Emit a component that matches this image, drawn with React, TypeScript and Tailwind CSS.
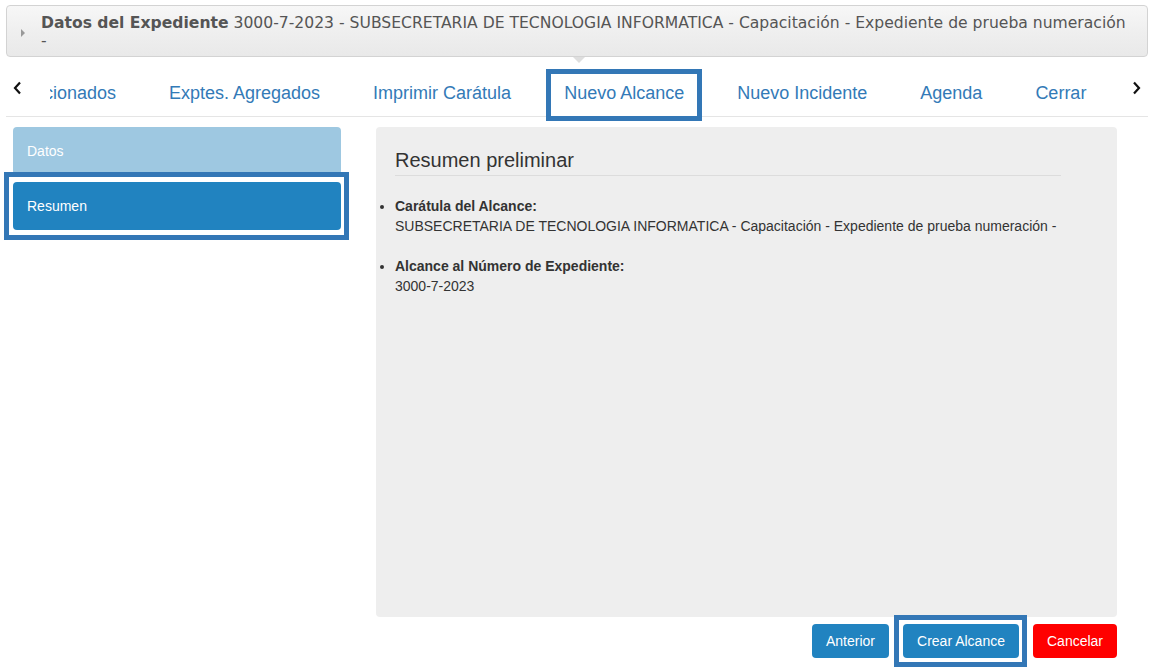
import { ReactNode } from "react";

const tabs = ["Exptes. Agregados", "Imprimir Carátula", "Nuevo Alcance", "Nuevo Incidente", "Agenda", "Cerrar"];

function Mark({ className }: { className: string }) {
  // annotation frame drawn over the screenshot
  return <div className={"pointer-events-none absolute border-[5px] border-[#3377b6] " + className} />;
}

function Chevron({ dir }: { dir: "left" | "right" }) {
  return (
    <svg width="12" height="14" viewBox="0 0 12 14" className="block">
      <polyline
        points={dir === "left" ? "8,1.5 3,7 8,12.5" : "4,1.5 9,7 4,12.5"}
        fill="none"
        stroke="#111"
        strokeWidth="2.2"
      />
    </svg>
  );
}

function Btn({ children, className }: { children: ReactNode; className: string }) {
  return (
    <button type="button" className={"h-[34px] rounded-[4px] text-[14px] text-white " + className}>
      {children}
    </button>
  );
}

export default function App() {
  return (
    <div className="relative h-[668px] w-[1154px] overflow-hidden bg-white font-['Liberation_Sans',Arial,sans-serif] text-[#333]">
      {/* expediente header */}
      <div className="relative mx-[6px] mt-[5px] h-[52px] rounded-[4px] border border-[#d3d3d3] bg-gradient-to-b from-[#f7f7f7] via-[#efefef] to-[#e9e9e9] pl-[34px] pt-[8px] font-['DejaVu_Sans',Verdana,sans-serif] text-[15.6px] leading-[18px] text-[#555]">
        <span className="absolute left-[14px] top-[23px] h-0 w-0 border-y-[4px] border-l-[4px] border-y-transparent border-l-[#999]" />
        <div className="whitespace-nowrap">
          <b>Datos del Expediente</b> 3000-7-2023 - SUBSECRETARIA DE TECNOLOGIA INFORMATICA - Capacitación - Expediente de prueba numeración
          <br />-
        </div>
        <span className="absolute -bottom-[7px] left-[566px] h-0 w-0 border-x-[6px] border-t-[6px] border-x-transparent border-t-[#dedede]" />
      </div>

      {/* tabs */}
      <div className="mx-[6px] mt-[11px] flex h-[49px] border-b border-[#e5e5e5]">
        <div className="flex w-[22px] justify-center pl-[2px] pt-[13px]">
          <Chevron dir="left" />
        </div>
        <div className="flex flex-1 overflow-x-clip pt-[2px] text-[18px] text-[#337ab7]">
          <div className="ml-[22px] mr-[26.5px] flex w-[66px] items-center justify-end overflow-hidden whitespace-nowrap">Relacionados</div>
          {tabs.map((t) => (
            <div key={t} className="relative flex items-center whitespace-nowrap px-[26.5px]">
              {t}
              {t === "Nuevo Alcance" && <Mark className="-bottom-[5px] -top-[1px] left-[8px] right-[9px]" />}
            </div>
          ))}
        </div>
        <div className="flex w-[30px] justify-end pr-[6px] pt-[13px]">
          <Chevron dir="right" />
        </div>
      </div>

      {/* body */}
      <div className="mt-[10px] flex">
        <div className="ml-[13px] flex w-[328px] flex-col gap-[7px] text-[14px] text-white">
          <div className="flex h-[48px] items-center rounded-[4px] bg-[#9ec8e1] pl-[14px]">Datos</div>
          <div className="relative flex h-[48px] items-center rounded-[4px] bg-[#2183c0] pl-[14px]">
            Resumen
            <Mark className="-bottom-[10px] -left-[9px] -right-[8px] -top-[10px]" />
          </div>
        </div>

        <div className="ml-[35px] w-[741px]">
          <div className="h-[490px] rounded-[4px] bg-[#eeeeee] pl-[19px] pr-[56px] pt-[22px]">
            <h2 className="border-b border-[#dcdcdc] pb-[4px] text-[20px] leading-[22px] text-[#333]">Resumen preliminar</h2>
            <ul className="mt-[20px] flex list-disc flex-col gap-[20px] text-[14px] leading-[20px] text-[#333]">
              <li>
                <b>Carátula del Alcance:</b>
                <br />
                SUBSECRETARIA DE TECNOLOGIA INFORMATICA - Capacitación - Expediente de prueba numeración -
              </li>
              <li>
                <b>Alcance al Número de Expediente:</b>
                <br />
                3000-7-2023
              </li>
            </ul>
          </div>
          <div className="mt-[7px] flex justify-end gap-[14px]">
            <Btn className="w-[77px] bg-[#2183c0]">Anterior</Btn>
            <div className="relative">
              <Btn className="w-[116px] bg-[#2183c0]">Crear Alcance</Btn>
              <Mark className="-bottom-[9px] -left-[9px] -right-[8px] -top-[9px]" />
            </div>
            <Btn className="w-[84px] bg-[#ff0000]">Cancelar</Btn>
          </div>
        </div>
      </div>
    </div>
  );
}
